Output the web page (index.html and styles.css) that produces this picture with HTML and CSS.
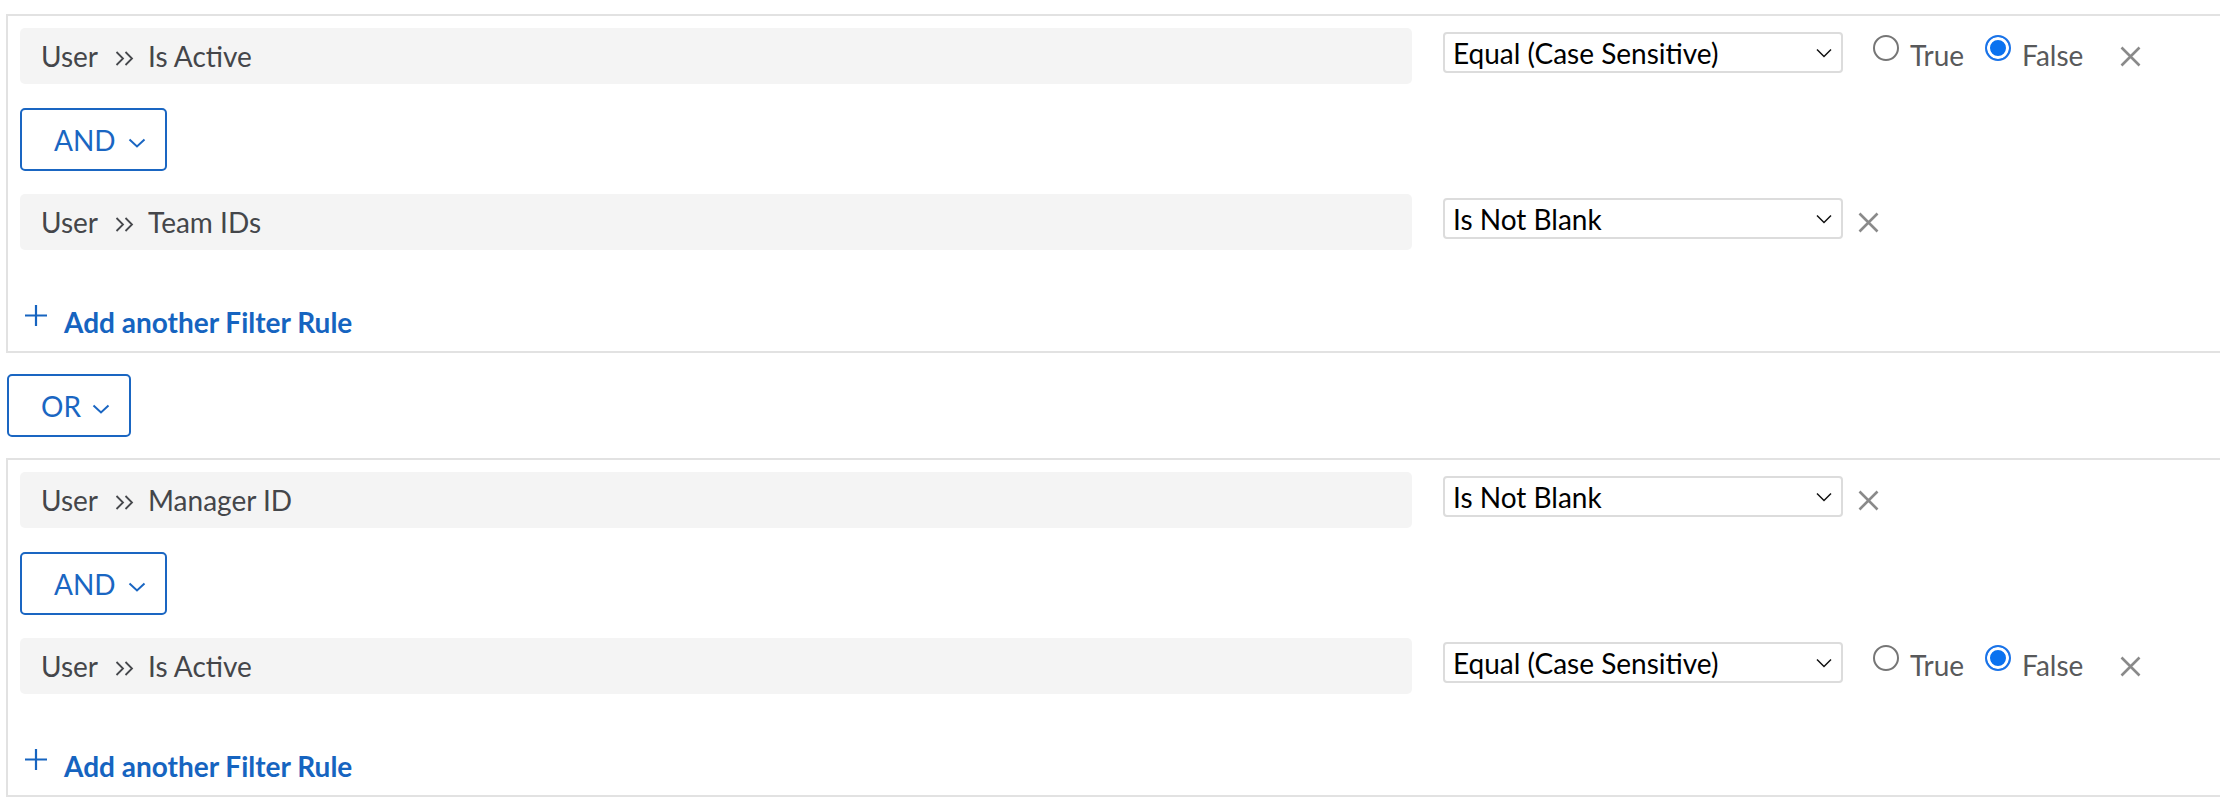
FILE: index.html
```html
<!DOCTYPE html>
<html>
<head>
<meta charset="utf-8">
<link rel="stylesheet" href="styles.css">
</head>
<body>
<div class="page">
  <div class="group">
    <div class="rule">
      <div class="field"><span>User</span><svg class="sep" width="19" height="15" viewBox="0 0 19 15"><path d="M1.5 1l6.5 6.5-6.5 6.5M10.5 1l6.5 6.5-6.5 6.5" fill="none" stroke="#46484c" stroke-width="1.8"/></svg><span>Is Active</span></div>
      <div class="ops">
        <div class="select"><span>Equal (Case Sensitive)</span><svg width="16" height="10" viewBox="0 0 16 10"><path d="M1 1.5l7 7 7-7" fill="none" stroke="#111" stroke-width="1.5"/></svg></div>
        <div class="radio"><span class="dot"></span><span class="rtext">True</span></div>
        <div class="radio radio2"><span class="dot on"></span><span class="rtext">False</span></div>
        <svg class="close close-far" width="21" height="21" viewBox="0 0 21 21"><path d="M1.5 1.5l18 18M19.5 1.5l-18 18" stroke="#8a8a8a" stroke-width="2.6"/></svg>
      </div>
    </div>
    <button class="logic">AND<svg width="18" height="10" viewBox="0 0 18 10"><path d="M1.5 1.5l7.5 7 7.5-7" fill="none" stroke="currentColor" stroke-width="2"/></svg></button>
    <div class="rule">
      <div class="field"><span>User</span><svg class="sep" width="19" height="15" viewBox="0 0 19 15"><path d="M1.5 1l6.5 6.5-6.5 6.5M10.5 1l6.5 6.5-6.5 6.5" fill="none" stroke="#46484c" stroke-width="1.8"/></svg><span>Team IDs</span></div>
      <div class="ops">
        <div class="select"><span>Is Not Blank</span><svg width="16" height="10" viewBox="0 0 16 10"><path d="M1 1.5l7 7 7-7" fill="none" stroke="#111" stroke-width="1.5"/></svg></div>
        <svg class="close" width="21" height="21" viewBox="0 0 21 21"><path d="M1.5 1.5l18 18M19.5 1.5l-18 18" stroke="#8a8a8a" stroke-width="2.6"/></svg>
      </div>
    </div>
    <div class="add"><svg width="22" height="22" viewBox="0 0 22 22"><path d="M11 0v21M0 10.5h22" stroke="currentColor" stroke-width="2.2"/></svg><span>Add another Filter Rule</span></div>
  </div>

  <button class="logic or">OR<svg width="18" height="10" viewBox="0 0 18 10"><path d="M1.5 1.5l7.5 7 7.5-7" fill="none" stroke="currentColor" stroke-width="2"/></svg></button>

  <div class="group">
    <div class="rule">
      <div class="field"><span>User</span><svg class="sep" width="19" height="15" viewBox="0 0 19 15"><path d="M1.5 1l6.5 6.5-6.5 6.5M10.5 1l6.5 6.5-6.5 6.5" fill="none" stroke="#46484c" stroke-width="1.8"/></svg><span>Manager ID</span></div>
      <div class="ops">
        <div class="select"><span>Is Not Blank</span><svg width="16" height="10" viewBox="0 0 16 10"><path d="M1 1.5l7 7 7-7" fill="none" stroke="#111" stroke-width="1.5"/></svg></div>
        <svg class="close" width="21" height="21" viewBox="0 0 21 21"><path d="M1.5 1.5l18 18M19.5 1.5l-18 18" stroke="#8a8a8a" stroke-width="2.6"/></svg>
      </div>
    </div>
    <button class="logic">AND<svg width="18" height="10" viewBox="0 0 18 10"><path d="M1.5 1.5l7.5 7 7.5-7" fill="none" stroke="currentColor" stroke-width="2"/></svg></button>
    <div class="rule">
      <div class="field"><span>User</span><svg class="sep" width="19" height="15" viewBox="0 0 19 15"><path d="M1.5 1l6.5 6.5-6.5 6.5M10.5 1l6.5 6.5-6.5 6.5" fill="none" stroke="#46484c" stroke-width="1.8"/></svg><span>Is Active</span></div>
      <div class="ops">
        <div class="select"><span>Equal (Case Sensitive)</span><svg width="16" height="10" viewBox="0 0 16 10"><path d="M1 1.5l7 7 7-7" fill="none" stroke="#111" stroke-width="1.5"/></svg></div>
        <div class="radio"><span class="dot"></span><span class="rtext">True</span></div>
        <div class="radio radio2"><span class="dot on"></span><span class="rtext">False</span></div>
        <svg class="close close-far" width="21" height="21" viewBox="0 0 21 21"><path d="M1.5 1.5l18 18M19.5 1.5l-18 18" stroke="#8a8a8a" stroke-width="2.6"/></svg>
      </div>
    </div>
    <div class="add"><svg width="22" height="22" viewBox="0 0 22 22"><path d="M11 0v21M0 10.5h22" stroke="currentColor" stroke-width="2.2"/></svg><span>Add another Filter Rule</span></div>
  </div>
</div>
</body>
</html>
```
FILE: styles.css
```css
* { box-sizing: border-box; }
html, body { margin: 0; padding: 0; background: #fff; }
body {
  width: 2220px;
  height: 806px;
  overflow: hidden;
  font-family: Lato, "Open Sans", "Liberation Sans", sans-serif;
  font-size: 28px;
  line-height: 34px;
  color: #46484c;
}
.page { padding: 14px 0 0 6px; }
.group {
  border: 2px solid #e2e2e2;
  border-right: 0;
  padding: 12px 0 12px 12px;
}
.rule { display: flex; align-items: flex-start; }
.field {
  flex: 0 0 1392px;
  height: 56px;
  background: #f4f4f4;
  border-radius: 5px;
  display: flex;
  align-items: center;
  padding-left: 21px;
  color: #44464a;
}
.sep { margin: 4px 14px 0 17px; flex: none; }
.ops { display: flex; align-items: flex-start; margin-left: 31px; padding-top: 4px; }
.select {
  width: 400px;
  height: 41px;
  border: 2px solid #dcdcdc;
  border-radius: 4px;
  display: flex;
  align-items: center;
  justify-content: space-between;
  padding: 0 9px 0 8px;
  color: #000;
  background: #fff;
}
.radio { display: flex; align-items: flex-start; margin-left: 30px; color: #58595b; }
.radio2 { margin-left: 21px; }
.dot {
  width: 26px;
  height: 26px;
  border-radius: 50%;
  border: 2px solid #767676;
  margin-top: 3px;
  margin-right: 11px;
  flex: none;
}
.dot.on {
  border-color: #1a73e8;
  background: #0a72f0;
  box-shadow: inset 0 0 0 3px #fff;
}
.rtext { margin-top: 6px; }
.close { margin: 14px 0 0 15px; flex: none; }
.close-far { margin-left: 37px; }
.logic {
  display: flex;
  align-items: center;
  gap: 12px;
  height: 63px;
  margin: 24px 0 23px;
  padding: 0 19px 0 32px;
  border: 2px solid #1a66c2;
  border-radius: 5px;
  background: #fff;
  color: #1a66c2;
  font: inherit;
}
.logic svg { margin-top: 6px; }
.logic.or { margin: 21px 0 21px 1px; gap: 11px; }
.add {
  display: flex;
  align-items: flex-start;
  gap: 17px;
  margin-top: 55px;
  padding-left: 5px;
  color: #1664c0;
  font-weight: 700;
}
.add svg { flex: none; }
```
